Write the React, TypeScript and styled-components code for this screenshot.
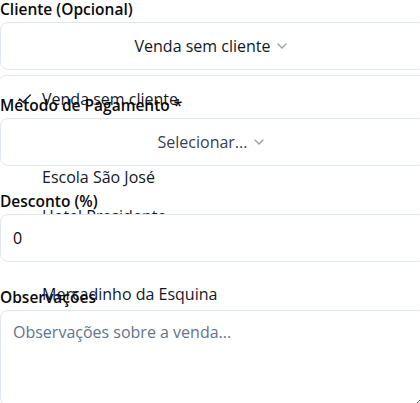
import React from 'react'
import styled, { createGlobalStyle } from 'styled-components'
import { Check, ChevronDown } from 'lucide-react'

const GlobalStyle = createGlobalStyle`
    body {
        margin: 0;
        overflow: hidden;
        background: #ffffff;
        font-family: "Open Sans", "Noto Sans", sans-serif;
    }
`

const Page = styled.div`
    width: 100vw;
    height: 100vh;
    overflow: hidden;
`

const Form = styled.form`
    display: flex;
    flex-direction: column;
    gap: 26px;
    width: 425px;
`

const Field = styled.div`
    position: relative;
    display: flex;
    flex-direction: column;
    gap: 4px;
`

const Label = styled.label`
    font-size: 15.5px;
    line-height: 18px;
    font-weight: 600;
    color: #0a0a0a;
`

const Trigger = styled.button<{ $muted?: boolean }>`
    position: relative;
    z-index: 1;
    height: 48px;
    display: flex;
    align-items: center;
    justify-content: center;
    gap: 4px;
    padding: 0 12px;
    border: 1px solid #e2e8f0;
    border-radius: 8px;
    background: #ffffff;
    font-family: inherit;
    font-size: 16px;
    color: ${props => (props.$muted ? '#374151' : '#0f172a')};

    svg {
        opacity: 0.5;
        color: #334155;
    }
`

const Popover = styled.div`
    position: absolute;
    z-index: 0;
    top: calc(100% + 5px);
    left: -2px;
    width: 100%;
    padding: 3px 4px;
    border: 1px solid #e2e8f0;
    border-radius: 8px;
    background: transparent;
`

const Item = styled.div`
    position: relative;
    height: 39px;
    display: flex;
    align-items: center;
    padding-left: 39px;
    font-size: 16px;
    line-height: 24px;
    color: #111827;

    svg {
        position: absolute;
        left: 14px;
        color: #111827;
    }
`

const Input = styled.input`
    position: relative;
    z-index: 1;
    height: 48px;
    box-sizing: border-box;
    padding: 0 12px;
    border: 1px solid #e2e8f0;
    border-radius: 8px;
    background: #ffffff;
    font-family: inherit;
    font-size: 16px;
    color: #0a0a0a;
`

const TextArea = styled.textarea`
    position: relative;
    z-index: 1;
    min-height: 96px;
    box-sizing: border-box;
    padding: 9px 12px;
    border: 1px solid #e2e8f0;
    border-radius: 8px;
    background: #ffffff;
    font-family: inherit;
    font-size: 16px;
    line-height: 24px;
    color: #0a0a0a;

    &::placeholder {
        color: #64748b;
    }
`

const clientes = [
    'Venda sem cliente',
    'Padaria Bom Pão',
    'Escola São José',
    'Hotel Presidente',
    'Restaurante Central',
    'Mercadinho da Esquina',
    'Supermercado Ideal',
]

const App = () => {
    return (
        <Page>
            <GlobalStyle />
            <Form>
                <Field>
                    <Label>Cliente (Opcional)</Label>
                    <Trigger type="button">
                        Venda sem cliente
                        <ChevronDown size={16} strokeWidth={2} />
                    </Trigger>
                    <Popover>
                        {clientes.map((c, i) => (
                            <Item key={c}>
                                {i === 0 && <Check size={16} strokeWidth={2} />}
                                {c}
                            </Item>
                        ))}
                    </Popover>
                </Field>
                <Field>
                    <Label>Método de Pagamento *</Label>
                    <Trigger type="button" $muted>
                        Selecionar...
                        <ChevronDown size={16} strokeWidth={2} />
                    </Trigger>
                </Field>
                <Field>
                    <Label>Desconto (%)</Label>
                    <Input type="text" defaultValue="0" />
                </Field>
                <Field>
                    <Label>Observações</Label>
                    <TextArea placeholder="Observações sobre a venda..." />
                </Field>
            </Form>
        </Page>
    )
}

export default App
